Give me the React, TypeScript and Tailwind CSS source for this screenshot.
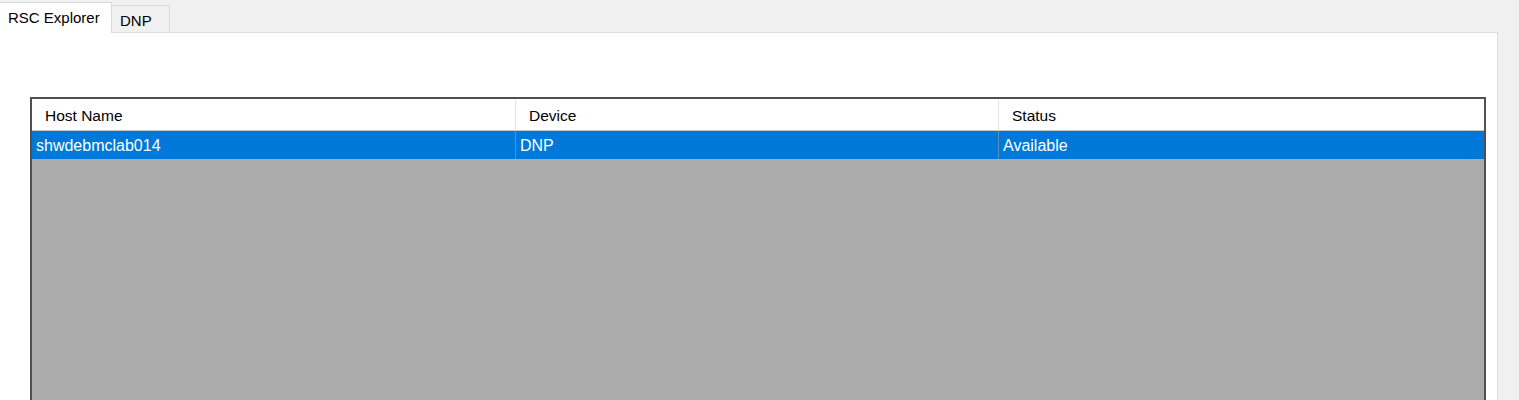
const columns = [
  { title: 'Host Name', value: 'shwdebmclab014' },
  { title: 'Device', value: 'DNP' },
  { title: 'Status', value: 'Available' },
];

export default function App() {
  return (
    <div className="h-[400px] w-[1519px] overflow-hidden bg-[#f0f0f0] font-['Liberation_Sans',Arial,sans-serif] text-[15px] text-black">
      {/* tab strip */}
      <div className="flex h-[32px] items-end">
        <div className="relative z-10 -mb-px flex h-[31px] w-[112px] items-start border-r border-t border-[#d9d9d9] bg-white pl-[8px] pt-[5px] leading-[20px]">
          RSC Explorer
        </div>
        <div className="flex h-[27px] w-[58px] items-start border-r border-t border-[#d9d9d9] bg-[#f0f0f0] pl-[8px] pt-[5px] leading-[20px]">
          DNP
        </div>
      </div>

      {/* tab page */}
      <div className="h-[368px] w-[1498px] border-r border-t border-[#dcdcdc] bg-white pl-[30px] pt-[64px]">
        <div className="h-[320px] w-[1456px] border-2 border-[#505050] bg-[#ababab]">
          <div className="grid h-[32px] grid-cols-[484px_483px_1fr] border-b border-[#c8c8c8] bg-white text-[15.5px]">
            {columns.map((c, i) => (
              <div
                key={c.title}
                className={`flex items-center pl-[13px] pt-[3px] ${i < 2 ? 'border-r border-[#e5e5e5]' : ''}`}
              >
                {c.title}
              </div>
            ))}
          </div>
          <div className="grid h-[28px] grid-cols-[484px_483px_1fr] bg-[#0078d7] text-[16px] text-white">
            {columns.map((c, i) => (
              <div
                key={c.title}
                className={`flex items-center pl-[4px] pt-px ${i < 2 ? 'border-r border-[#5a8fc0]' : ''}`}
              >
                {c.value}
              </div>
            ))}
          </div>
        </div>
      </div>
    </div>
  );
}
